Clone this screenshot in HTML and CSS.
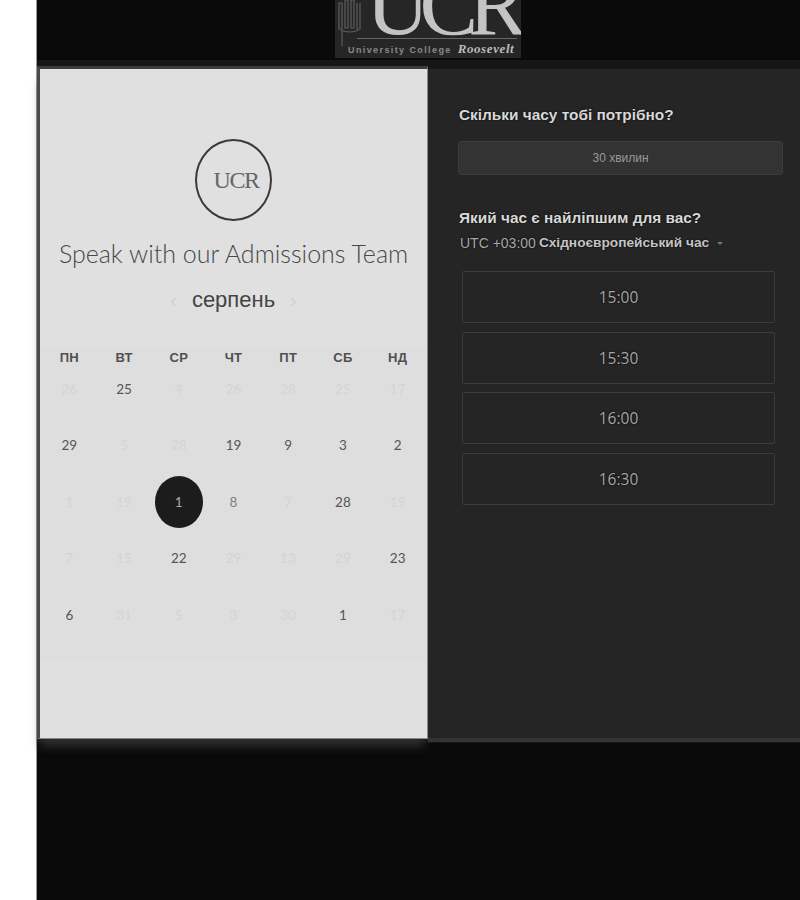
FILE: index.html
```html
<!DOCTYPE html>
<html lang="uk">
<head>
<meta charset="utf-8">
<title>Speak with our Admissions Team</title>
<link rel="stylesheet" href="styles.css">
</head>
<body>
<div class="gutter"></div>
<main class="stage">
  <header class="top">
    <div class="logo">
      <svg class="logo-mark" width="24" height="46" viewBox="0 0 24 46" fill="none" stroke="#5c5c5c" stroke-width="1.2">
        <path d="M2 3v26h3V3zM8 0v28h3V0zM14 0v28h3V0zM20 3v26h3V3"/>
        <path d="M4 30q8 4 18 0M5 30v16"/>
      </svg>
      <div class="logo-letters">UCR</div>
      <div class="logo-rule"></div>
      <div class="logo-sub">University College <em>Roosevelt</em></div>
    </div>
  </header>
  <section class="panel">
    <div class="card">
      <div class="badge"><span class="badge-text">UCR</span></div>
      <h1 class="title">Speak with our Admissions Team</h1>
      <div class="month">
        <span class="arrow">‹</span>
        <span class="month-name">серпень</span>
        <span class="arrow">›</span>
      </div>
      <div class="calendar">
        <div class="weekdays">
          <span>ПН</span><span>ВТ</span><span>СР</span><span>ЧТ</span><span>ПТ</span><span>СБ</span><span>НД</span>
        </div>
        <div class="days">
          <span class="off">26</span><span>25</span><span class="off">4</span><span class="off">26</span><span class="off">28</span><span class="off">25</span><span class="off">17</span>
          <span>29</span><span class="off">5</span><span class="off">28</span><span>19</span><span>9</span><span>3</span><span>2</span>
          <span class="off">1</span><span class="off">19</span><span class="sel"><b>1</b></span><span class="mid">8</span><span class="off">7</span><span>28</span><span class="off">19</span>
          <span class="off">7</span><span class="off">15</span><span>22</span><span class="off">29</span><span class="off">13</span><span class="off">29</span><span>23</span>
          <span>6</span><span class="off">31</span><span class="off">5</span><span class="off">3</span><span class="off">30</span><span>1</span><span class="off">17</span>
        </div>
      </div>
    </div>
    <div class="side">
      <h2 class="q q-first">Скільки часу тобі потрібно?</h2>
      <div class="duration">30 хвилин</div>
      <h2 class="q q-second">Який час є найліпшим для вас?</h2>
      <div class="zone"><span class="utc">UTC +03:00</span> <span class="zone-name">Східноєвропейський час</span><span class="caret"></span></div>
      <div class="slots">
        <button class="slot">15:00</button>
        <button class="slot">15:30</button>
        <button class="slot">16:00</button>
        <button class="slot">16:30</button>
      </div>
    </div>
  </section>
</main>
</body>
</html>
```
FILE: styles.css
```css
* { box-sizing: border-box; }
html, body { margin: 0; height: 900px; overflow: hidden; }
body { display: flex; background: #fff; font-family: "Liberation Sans", sans-serif; }
.gutter { width: 37px; flex: none; border-right: 1px solid #999; background: #fff; }
.stage { flex: 1; min-width: 0; height: 900px; background: #0a0a0a; }

.top { height: 60px; padding-left: 298px; overflow: hidden; }
.logo { position: relative; width: 186px; height: 58px; background: #262626; overflow: hidden; }
.logo-mark { position: absolute; left: 2px; top: 0; }
.logo-letters { position: absolute; left: 31px; top: -25px; font-family: "Liberation Serif", serif; font-size: 88px; line-height: 60px; color: #c4c4c4; letter-spacing: -10px; white-space: nowrap; }
.logo-rule { position: absolute; left: 22px; right: 4px; top: 38px; height: 1px; background: #666; }
.logo-sub { position: absolute; left: 13px; top: 43px; font-size: 9px; line-height: 11px; color: #8a8a8a; letter-spacing: 1.4px; white-space: nowrap; font-weight: bold; }
.logo-sub em { font-family: "Liberation Serif", serif; font-size: 13px; color: #bbb; letter-spacing: .6px; margin-left: 2px; }

.panel { display: flex; height: 683px; padding-top: 6px; background: #161616; }

.card { width: 391px; flex: none; height: 673px; background: #e0e0e0; border-top: 3px solid #3c3c3c; border-left: 3px solid #4a4a4a; border-right: 1px solid #888; border-bottom: 1px solid #888; box-shadow: 0 12px 8px -4px #2c2c2c; display: flex; flex-direction: column; align-items: center; padding-top: 70px; }
.badge { width: 77px; height: 82px; flex: none; border: 2px solid #3a3a3a; border-radius: 50%; display: flex; align-items: center; justify-content: center; }
.badge-text { font-family: "Liberation Serif", serif; font-size: 24px; letter-spacing: -1.5px; color: #666; margin-left: 5px; }
.title { margin: 17px 0 0; font-family: Lato, sans-serif; font-weight: 300; font-size: 25px; line-height: 30px; color: #484848; white-space: nowrap; }
.month { display: flex; align-items: center; justify-content: center; gap: 15px; height: 28px; margin-top: 18px; }
.month-name { font-size: 22px; line-height: 28px; color: #444; }
.arrow { font-size: 20px; line-height: 24px; color: #d0d0d0; }

.calendar { width: 100%; margin-top: 33px; padding: 0 2px 10px; background: #dedede; }
.weekdays, .days { display: grid; grid-template-columns: repeat(7, 1fr); text-align: center; }
.weekdays { height: 20px; align-items: center; font-size: 13px; font-weight: bold; color: #505050; letter-spacing: .2px; }
.days { grid-auto-rows: 56.5px; font-family: Lato, sans-serif; font-size: 13.5px; color: #555; }
.days span { display: flex; align-items: center; justify-content: center; height: 43px; }
.days .off { color: #d4d4d4; }
.days .mid { color: #808080; }
.days .sel b { display: flex; align-items: center; justify-content: center; flex: none; width: 48px; height: 52px; border-radius: 50%; background: #1c1c1c; color: #aaa; font-weight: 400; }

.side { flex: 1; min-width: 0; height: 673px; margin-top: 3px; background: #252525; border-bottom: 4px solid #333; padding: 36px 17px 0 31px; }
.q { margin: 0; font-size: 15.4px; line-height: 20px; font-weight: bold; color: #d8d8d8; text-shadow: 0 0 2px #000; white-space: nowrap; }
.duration { height: 34px; margin-top: 16px; margin-left: -1px; background: #333; border: 1px solid #3c3c3c; border-radius: 3px; display: flex; align-items: center; justify-content: center; font-size: 12px; color: #999; }
.q-second { margin-top: 33px; }
.zone { margin-top: 7px; margin-left: 1px; font-size: 14px; line-height: 16px; color: #c4c4c4; text-shadow: 0 0 2px #000; white-space: nowrap; display: flex; align-items: center; gap: 3px; }
.utc { color: #a8a8a8; }
.zone-name { font-weight: bold; font-size: 13.7px; }
.caret { width: 0; height: 0; margin-left: 5px; border: 3px solid transparent; border-top: 3px solid #777; border-bottom: 0; }
.slots { display: flex; flex-direction: column; gap: 8.7px; margin: 20px 8px 0 3px; }
.slot { height: 52px; background: transparent; border: 1px solid #3c3c3c; border-radius: 2px; padding: 0; font-family: "Open Sans", sans-serif; font-size: 15.5px; color: #a6a6a6; text-shadow: 0 0 2px #000; }
```
